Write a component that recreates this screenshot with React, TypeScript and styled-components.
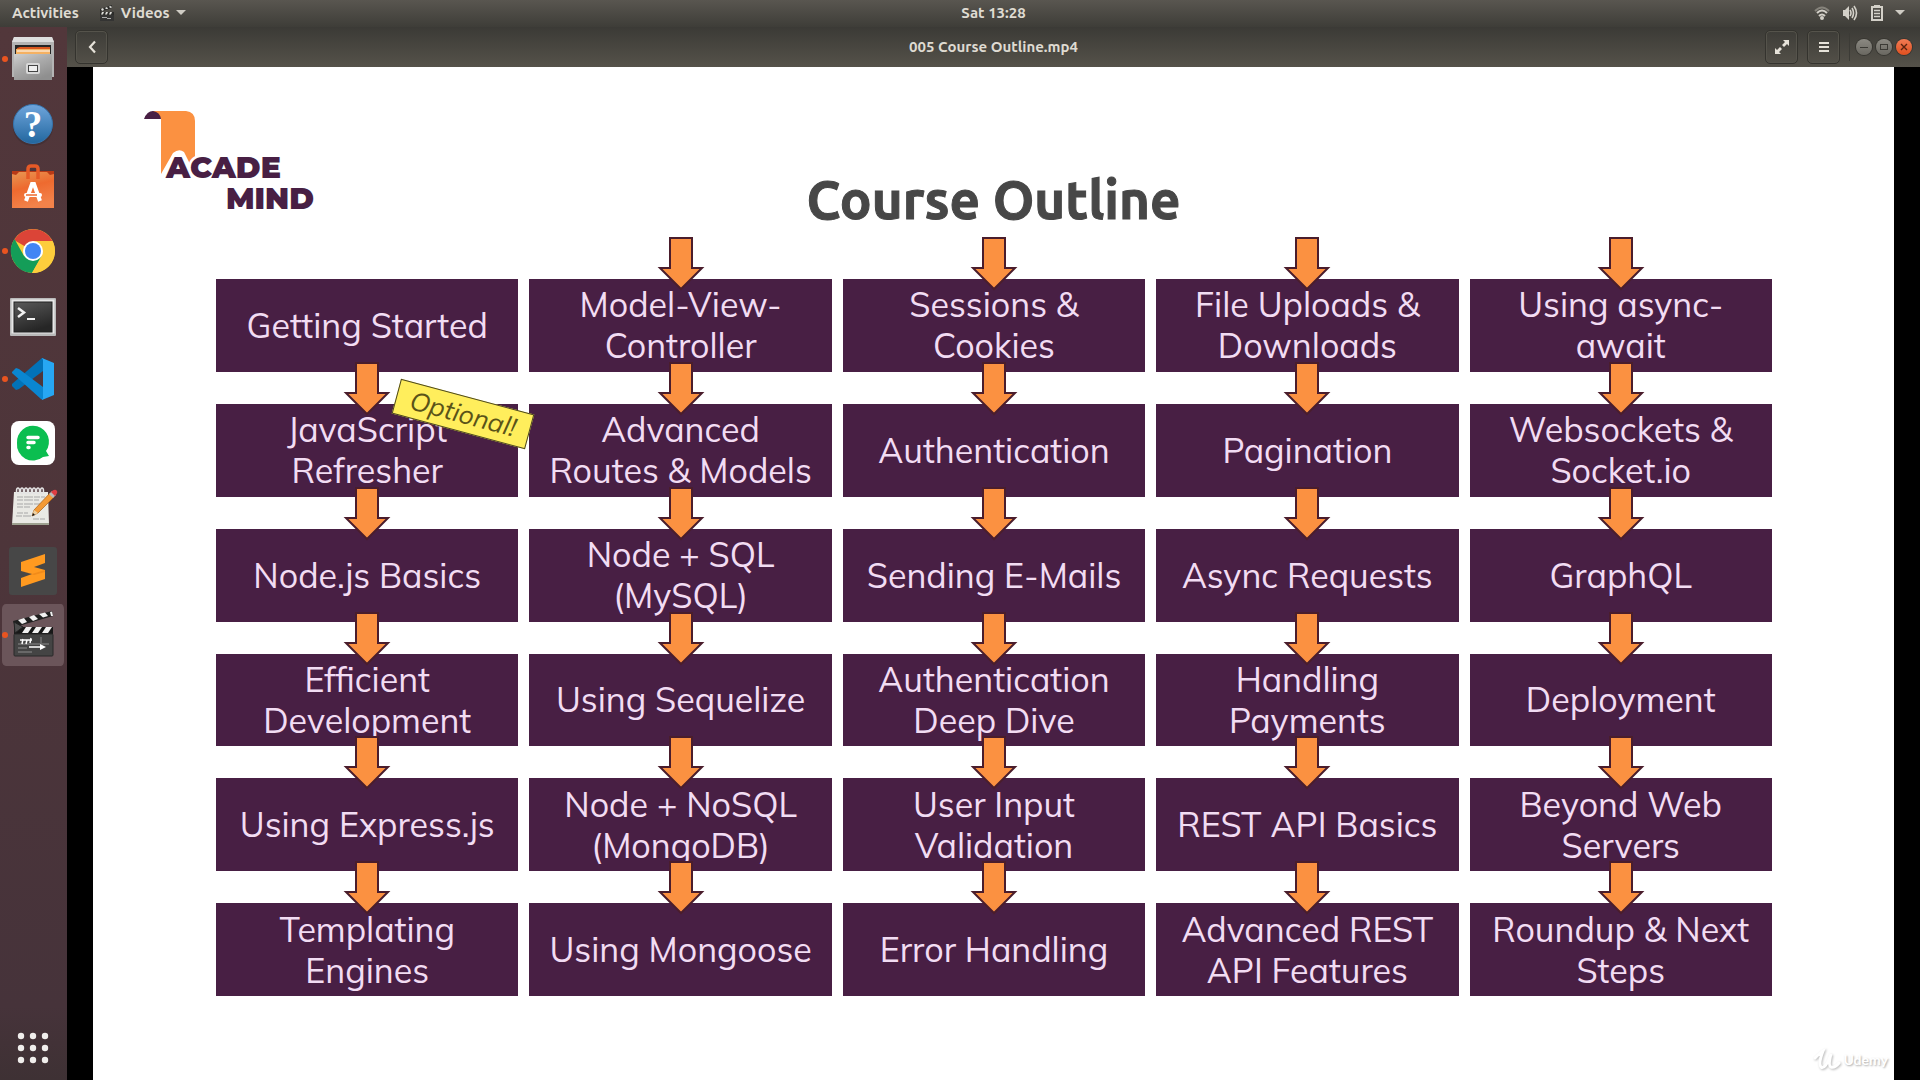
import React from "react";
import styled, { createGlobalStyle } from "styled-components";

const GlobalStyle = createGlobalStyle`
  *, *::before, *::after { box-sizing: border-box; }
  html, body, #root { height: 100%; }
  body {
    margin: 0;
    background: #000;
    overflow: hidden;
  }
  button { font: inherit; color: inherit; }
`;

const uiFont = `Ubuntu, "Noto Sans", "Open Sans", sans-serif`;
const slideFont = `Muli, Mulish, Nunito, Lato, "Noto Sans", sans-serif`;

const Desktop = styled.div`
  display: grid;
  grid-template: 27px minmax(0, 1fr) / 67px minmax(0, 1fr);
  height: 100vh;
  font: 600 15px/20px ${uiFont};
  color: #dfdbd2;
`;

/* ---------- top panel ---------- */

const TopPanel = styled.header`
  grid-column: 1 / -1;
  display: grid;
  grid-template-columns: 67px 1fr auto 1fr;
  align-items: center;
  padding-bottom: 1px;
  background: linear-gradient(#595650, #3e3d38);
`;

const PanelMenus = styled.nav`
  grid-column: 1 / 3;
  display: flex;
  align-items: center;
  gap: 20px;
  padding-left: 12px;
`;

const PanelButton = styled.button`
  display: flex;
  align-items: center;
  gap: 6px;
  padding: 0;
  border: 0;
  background: none;
`;

const StatusArea = styled(PanelButton)`
  justify-self: end;
  gap: 12px;
  padding-right: 15px;
`;

/* ---------- dock ---------- */

const DockBar = styled.nav`
  display: flex;
  flex-direction: column;
  background: linear-gradient(#52373b, #4d353a 50%, #46333a 93%, #3e3134);
`;

const DockItem = styled.button<{ $active?: boolean }>`
  height: 64px;
  padding: 0;
  border: 0;
  background: ${(p) => (p.$active ? "#6b555a" : "none")};
  background-clip: padding-box;
  border: solid transparent;
  border-width: 1px 3px 1px 2px;
  border-radius: 6px;

  svg {
    display: block;
    margin: -1px -3px -1px -2px;
  }
`;

const AppsItem = styled(DockItem)`
  margin-top: auto;
`;

/* ---------- window ---------- */

const PlayerWindow = styled.main`
  display: grid;
  grid-template-rows: 40px minmax(0, 1fr);
  min-width: 0;
`;

const TitleBar = styled.div`
  display: grid;
  grid-template-columns: 1fr auto 1fr;
  align-items: center;
  padding: 0 8px;
  background: linear-gradient(#3b3a36, #55524a);
`;

const WindowTitle = styled.h1`
  margin: 0;
  font-size: 15px;
  font-weight: 700;
`;

const TitleActions = styled.div`
  display: flex;
  align-items: center;
  justify-self: end;
  gap: 9px;
`;

const ToolButton = styled.button`
  display: grid;
  place-items: center;
  width: 33px;
  height: 34px;
  padding: 0;
  border: 1px solid #34332e;
  border-radius: 5px;
  background: transparent;
  box-shadow: inset 0 0 0 1px #55534b;
`;

const WindowControls = styled.div`
  display: flex;
  gap: 4px;
  padding-left: 6px;
  border-left: 1px solid #3c3b36;
  height: 28px;
  align-items: center;
`;

const RoundButton = styled.button<{ $close?: boolean }>`
  display: grid;
  place-items: center;
  width: 16px;
  height: 16px;
  padding: 0;
  border: 0;
  border-radius: 50%;
  background: ${(p) => (p.$close ? "linear-gradient(#f27b54, #e0501f)" : "linear-gradient(#8b8982, #6a6861)")};
  box-shadow: 0 0 0 1px #373631;
`;

const VideoArea = styled.section`
  display: flex;
  justify-content: center;
  background: #000;
`;

/* ---------- slide ---------- */

const Slide = styled.article`
  position: relative;
  display: flex;
  flex-direction: column;
  aspect-ratio: 16 / 9;
  height: 100%;
  padding-bottom: 84px;
  background: #fff;
  font-family: ${slideFont};
  font-weight: 400;
`;

const SlideHeader = styled.header`
  display: grid;
  grid-template-columns: 1fr auto 1fr;
  height: 212px;
  padding: 40px 51px 0;
`;

const SlideTitle = styled.h2`
  margin: 0;
  padding-top: 56px;
  font: 700 53px/73px ${uiFont};
  color: #474747;
  -webkit-text-stroke: 1px #474747;
`;

const OutlineGrid = styled.ol`
  flex: 1;
  display: grid;
  grid-template-columns: repeat(5, minmax(0, 1fr));
  grid-template-rows: repeat(6, minmax(0, 1fr));
  grid-auto-flow: column;
  gap: 32px 11px;
  margin: 0;
  padding: 0 122px 0 123px;
  list-style: none;
`;

const Topic = styled.li`
  position: relative;
  display: flex;
  align-items: center;
  justify-content: center;
  background: #481f44;
  color: #f2dcf3;
  font-size: 34px;
  line-height: 41px;
  text-align: center;
  white-space: pre-line;
`;

const ArrowIcon = styled.svg`
  position: absolute;
  z-index: 1;
  top: -43px;
  left: calc(50% - 24px);
`;

const OptionalTag = styled.span`
  position: absolute;
  z-index: 2;
  top: -8px;
  right: -14px;
  width: 138px;
  border: 1px solid #4c4820;
  background: #ffee5c;
  color: #5a5318;
  font-size: 26px;
  font-style: italic;
  line-height: 34px;
  transform: rotate(15deg);
`;

const Watermark = styled.div`
  position: absolute;
  right: 6px;
  bottom: 8px;
  display: flex;
  align-items: center;
  gap: 2px;
  color: #fff;
  font: 700 14px/24px Lato, sans-serif;
  text-shadow: 1px 1px 2px #aaa;

  svg { filter: drop-shadow(1px 1px 1px #bbb); }
`;

const GradientDefs = styled.svg`
  position: absolute;
`;

/* ---------- drawings ---------- */

const DownArrow = () => (
  <ArrowIcon width="48" height="55" viewBox="0 0 48 55" aria-hidden="true">
    <path d="M13 2H35V32H45L24 53L3 32H13Z" fill="#fb9141" stroke="#4a1d2c" strokeWidth="2" />
  </ArrowIcon>
);

const AcademindLogo = () => (
  <svg width="180" height="110" viewBox="0 0 180 110" role="img" aria-label="Academind">
    <path d="M8 4H42Q51 5 51 14V67L40 45Q35 41 29 46L17 67V12Z" fill="#fb9141" />
    <path d="M0 12Q3 4 9 4Q16 5 17 12Z" fill="#481f44" />
    <g fill="#481f44" fontFamily="Montserrat, Inter, sans-serif" fontWeight="900" fontSize="30">
      <text x="22" y="71" stroke="#fff" strokeWidth="5" strokeLinejoin="round" paintOrder="stroke">ACADE</text>
      <text x="82" y="102">MIND</text>
    </g>
  </svg>
);

const Caret = () => (
  <svg width="10" height="6" viewBox="0 0 10 6" aria-hidden="true">
    <path d="M0 0H10L5 5Z" fill="#cfccc4" />
  </svg>
);

const MiniClapper = () => (
  <svg width="16" height="16" viewBox="0 0 16 16" aria-hidden="true">
    <path d="M1 4L13 0V3L1 7ZM1 7H15V10H1Z" fill="#2c2c2a" />
    <path d="M2 4L4 3L5 5L3 6ZM6 3L8 2L9 4L7 4ZM10 1.500L12 1L13 2.500L11 3ZM3 7H5L4 9.500H2ZM7 7H9L8 9.500H6ZM11 7H13L12 9.500H10Z" fill="#dcdcd8" />
    <rect x="1" y="10" width="14" height="6" fill="#343433" />
    <path d="M3 12.500H8M8 13.500H12" stroke="#aaa" />
  </svg>
);

const Wifi = () => (
  <svg width="16" height="14" viewBox="0 0 16 14" fill="none" strokeWidth="2" aria-hidden="true">
    <path d="M1 5Q8 -2 15 5" stroke="#86837b" />
    <path d="M3 7Q8 2 13 7M5 10Q8 7 11 10" stroke="#d3d0c8" />
    <circle cx="8" cy="12" r="2" fill="#d3d0c8" />
  </svg>
);

const Speaker = () => (
  <svg width="17" height="16" viewBox="0 0 17 16" fill="none" stroke="#d3d0c8" strokeWidth="1.6" aria-hidden="true">
    <path d="M1 5H3L7 1V15L3 11H1Z" fill="#d3d0c8" stroke="none" />
    <path d="M8 5Q10 8 8 11M10 3Q13 8 10 13M12 1Q17 8 12 15" />
  </svg>
);

const Battery = () => (
  <svg width="12" height="16" viewBox="0 0 12 16" aria-hidden="true">
    <path d="M3 0H9V2H3Z" fill="#d3d0c8" />
    <rect x="1" y="2" width="10" height="13" fill="none" stroke="#d3d0c8" strokeWidth="2" />
    <path d="M3 5.500H9M3 8.500H9M3 11.500H9" stroke="#d3d0c8" strokeWidth="1.5" />
  </svg>
);

const FilesIcon = () => (
  <>
    <path d="M14 10H52L54 15V50H12V15Z" fill="#b4b4b4" />
    <path d="M14 10H52L54 15H12Z" fill="#dedede" />
    <rect x="15" y="18" width="36" height="10" fill="#252525" />
    <path d="M17 21L20 20H50V28H16Z" fill="#d9571f" />
    <path d="M16 22H50V27H16Z" fill="#f5b162" />
    <path d="M17 24H50" stroke="#fff" />
    <path d="M14 27H52V53H14Z" fill="url(#steel)" />
    <rect x="26" y="36" width="14" height="11" rx="2" fill="#d8d8d8" />
    <rect x="28.5" y="38.500" width="9" height="6" fill="#eee" stroke="#444" />
  </>
);

const HelpIcon = () => (
  <>
    <ellipse cx="33" cy="36" rx="20" ry="19" fill="#35292d" opacity=".4" />
    <circle cx="33" cy="33" r="19.500" fill="url(#blue)" stroke="#3574ad" />
    <text x="33" y="46" textAnchor="middle" fill="#fff" fontFamily="Liberation Serif, serif" fontWeight="700" fontSize="37">?</text>
  </>
);

const SoftwareIcon = () => (
  <>
    <path d="M12 16H54V53H12Z" fill="url(#bag)" />
    <path d="M12 16H54V19L50 20L47 17H19L16 20L12 19Z" fill="#b93a16" />
    <path d="M28 24V14Q28 11 31 11H35Q38 11 38 14V24" fill="none" stroke="#e65a27" strokeWidth="3.500" />
    <path d="M26 46L32 29H34L40 46" fill="none" stroke="#fff" strokeWidth="4" />
    <rect x="24" y="38" width="18" height="4" rx="2" fill="#fff" />
    <path d="M26 40H37" stroke="#ee6a2f" strokeWidth="1.500" />
  </>
);

const ChromeIcon = () => (
  <>
    <circle cx="33" cy="32" r="22" fill="#fdcd3c" />
    <path d="M33 32L14 21A22 22 0 0 1 52.500 22H33Z" fill="#db4437" />
    <path d="M14.500 20A22 22 0 0 0 32 54L42 37L33 32L24 37Z" fill="#149d58" />
    <path d="M33 22H52.500A22 22 0 0 1 32 54L41.500 37Z" fill="#fdcd3c" />
    <circle cx="33" cy="32" r="10" fill="#fff" />
    <circle cx="33" cy="32" r="8" fill="#4285f4" />
  </>
);

const TerminalIcon = () => (
  <>
    <rect x="10" y="15" width="46" height="38" rx="1" fill="#b9b9b9" />
    <rect x="11.500" y="16.500" width="43" height="34" fill="#e7e7e7" />
    <rect x="14" y="19" width="38" height="30" fill="url(#screen)" stroke="#222" />
    <path d="M18 25L24 29.500L18 34" fill="none" stroke="#f2f2f2" strokeWidth="2.500" />
    <path d="M27 36H35" stroke="#f2f2f2" strokeWidth="2" />
  </>
);

const CodeIcon = () => (
  <>
    <path d="M43 11V24L19 42L16 43L12 39V37L42 11Z" fill="#0272b8" />
    <path d="M12 27V25L16 21L19 22L43 40V53L41 52L12 26Z" fill="#0a86d1" />
    <path d="M42 11L54 16V48L42 53L43 51V13Z" fill="#27a7f3" />
  </>
);

const ChatIcon = () => (
  <>
    <rect x="11" y="10" width="44" height="44" rx="8" fill="#fff" />
    <path d="M17 32A16 16 0 1 1 46 40L49 45L43 46A16 16 0 0 1 17 32Z" fill="#0bbe50" />
    <path d="M28 26.500H38M28 31.500H34M28 36.500H29" stroke="#fff" strokeWidth="3.500" strokeLinecap="round" />
  </>
);

const EditorIcon = () => (
  <>
    <path d="M14 17H48L49 50H12Z" fill="#e9e9e4" />
    <path d="M12 48H49V50H12Z" fill="#9da08f" />
    <path d="M17 22H45M17 25H39M17 29H43M17 32H30M17 38H28M16 41H31M33 44H45" stroke="#a7a7a7" strokeDasharray="6 1 9 1" />
    <g fill="none" stroke="#e4e4e4" strokeWidth="1.500">
      {[18, 22, 26, 30, 34, 38, 42].map((x) => (
        <ellipse key={x} cx={x} cy="16" rx="1.500" ry="3" />
      ))}
    </g>
    <path d="M32 41L34 35L50 18L54 22L38 38Z" fill="#f39a35" stroke="#a85e16" strokeWidth=".7" />
    <path d="M32 41L34 35L38 38Z" fill="#ecd1a4" />
    <path d="M32 41L33 38L35 40Z" fill="#111" />
    <path d="M49 19L52 16L56 20L53 23Z" fill="#b9b9b9" />
    <path d="M51 17Q55 13 57 16Q58 18 55 21Z" fill="#de3d43" />
  </>
);

const SublimeIcon = () => (
  <>
    <rect x="9" y="8" width="48" height="48" rx="3" fill="#474747" />
    <path d="M21 23L45 15V24L34 28L45 31V40L21 48V39L32 35L21 32Z" fill="#ff9a20" />
    <path d="M21 32L32 35L45 31V33L34 36Z" fill="#e47b13" opacity=".5" />
  </>
);

const VideosIcon = () => (
  <>
    <path d="M13 18L52 8L53 13L15 24Z" fill="#1f1f1f" />
    <path d="M18 17L24 15L27 19L22 21ZM29 14L34 12L38 16L33 18ZM39 11L45 9.500L48 13L43 14.500ZM50 9L52 8.500L53 13L51 13Z" fill="#f1f1f1" />
    <path d="M14 24H53V31H14Z" fill="#181818" />
    <path d="M26 24H32L28 30H22ZM36 24H42L38 30H32ZM46 24H52L48 30H42Z" fill="#f1f1f1" />
    <path d="M14 19L23 24L15 30Z" fill="#4d4d4d" stroke="#222" />
    <rect x="14" y="31" width="39" height="22" rx="1" fill="#444" stroke="#292929" />
    <path d="M18 41H49M18 45H27M18 49H32M41 34V40" stroke="#8c8c8c" />
    <path d="M20 37H32M23 36L22 41M27 37L26 41M31 35L30 40M29 44H42" stroke="#fff" strokeWidth="1.500" />
    <path d="M40 41L46 44L40 47Z" fill="#fff" />
  </>
);

const AppsIcon = () => (
  <g fill="#f0eeec">
    {[20, 32, 44].flatMap((y) => [21, 33, 45].map((x) => <circle key={`${x}-${y}`} cx={x} cy={y} r="3.200" />))}
  </g>
);

const IconCell = ({ running, children }: { running?: boolean; children: React.ReactNode }) => (
  <svg width="67" height="64" viewBox="0 0 67 64" aria-hidden="true">
    {children}
    {running && <circle cx="5" cy="32" r="3" fill="#e95420" />}
  </svg>
);

const Gradients = () => (
  <GradientDefs width="0" height="0" aria-hidden="true">
    <defs>
      <linearGradient id="steel" x2=".6" y2="1">
        <stop stopColor="#cfcfcf" />
        <stop offset=".5" stopColor="#aaa" />
        <stop offset="1" stopColor="#8f8f8f" />
      </linearGradient>
      <linearGradient id="blue" x2="0" y2="1">
        <stop stopColor="#6fa5dc" />
        <stop offset="1" stopColor="#22679f" />
      </linearGradient>
      <linearGradient id="bag" x2=".3" y2="1">
        <stop stopColor="#e79a55" />
        <stop offset=".5" stopColor="#ee6a2f" />
        <stop offset="1" stopColor="#f3824a" />
      </linearGradient>
      <linearGradient id="screen" x2=".4" y2="1">
        <stop stopColor="#5a5a5a" />
        <stop offset="1" stopColor="#262626" />
      </linearGradient>
    </defs>
  </GradientDefs>
);

/* ---------- data ---------- */

const apps = [
  { name: "Files", Icon: FilesIcon, running: true },
  { name: "Help", Icon: HelpIcon },
  { name: "Ubuntu Software", Icon: SoftwareIcon },
  { name: "Google Chrome", Icon: ChromeIcon, running: true },
  { name: "Terminal", Icon: TerminalIcon },
  { name: "Visual Studio Code", Icon: CodeIcon, running: true },
  { name: "Flock", Icon: ChatIcon },
  { name: "Text Editor", Icon: EditorIcon },
  { name: "Sublime Text", Icon: SublimeIcon },
  { name: "Videos", Icon: VideosIcon, running: true, active: true },
];

const columns = [
  ["Getting Started", "JavaScript\nRefresher", "Node.js Basics", "Efficient\nDevelopment", "Using Express.js", "Templating\nEngines"],
  ["Model-View-\nController", "Advanced\nRoutes & Models", "Node + SQL\n(MySQL)", "Using Sequelize", "Node + NoSQL\n(MongoDB)", "Using Mongoose"],
  ["Sessions &\nCookies", "Authentication", "Sending E-Mails", "Authentication\nDeep Dive", "User Input\nValidation", "Error Handling"],
  ["File Uploads &\nDownloads", "Pagination", "Async Requests", "Handling\nPayments", "REST API Basics", "Advanced REST\nAPI Features"],
  ["Using async-\nawait", "Websockets &\nSocket.io", "GraphQL", "Deployment", "Beyond Web\nServers", "Roundup & Next\nSteps"],
];

const topics = columns.flat();

export default function App() {
  return (
    <Desktop>
      <GlobalStyle />
      <Gradients />
      <TopPanel>
        <PanelMenus>
          <PanelButton>Activities</PanelButton>
          <PanelButton>
            <MiniClapper />
            Videos
            <Caret />
          </PanelButton>
        </PanelMenus>
        <PanelButton>Sat 13:28</PanelButton>
        <StatusArea aria-label="System menu">
          <Wifi />
          <Speaker />
          <Battery />
          <Caret />
        </StatusArea>
      </TopPanel>

      <DockBar aria-label="Dock">
        {apps.map(({ name, Icon, running, active }) => (
          <DockItem key={name} aria-label={name} $active={active}>
            <IconCell running={running}>
              <Icon />
            </IconCell>
          </DockItem>
        ))}
        <AppsItem aria-label="Show Applications">
          <IconCell>
            <AppsIcon />
          </IconCell>
        </AppsItem>
      </DockBar>

      <PlayerWindow>
        <TitleBar>
          <ToolButton aria-label="Back">
            <svg width="10" height="14" viewBox="0 0 10 14" aria-hidden="true">
              <path d="M8 1.500L3 7L8 12.500" fill="none" stroke="#e6e2d9" strokeWidth="2.200" />
            </svg>
          </ToolButton>
          <WindowTitle>005 Course Outline.mp4</WindowTitle>
          <TitleActions>
            <ToolButton aria-label="Fullscreen">
              <svg width="16" height="16" viewBox="0 0 16 16" aria-hidden="true">
                <path d="M9 1H15V7L13 5L10 8L8 6L11 3ZM7 15H1V9L3 11L6 8L8 10L5 13Z" fill="#e6e2d9" />
              </svg>
            </ToolButton>
            <ToolButton aria-label="Menu">
              <svg width="10" height="10" viewBox="0 0 10 10" aria-hidden="true">
                <path d="M0 1H10M0 5H10M0 9H10" stroke="#e6e2d9" strokeWidth="2" />
              </svg>
            </ToolButton>
            <WindowControls>
              <RoundButton aria-label="Minimize">
                <svg width="8" height="8" viewBox="0 0 8 8" aria-hidden="true">
                  <path d="M0 4.500H8" stroke="#3b3a35" />
                </svg>
              </RoundButton>
              <RoundButton aria-label="Maximize">
                <svg width="8" height="8" viewBox="0 0 8 8" aria-hidden="true">
                  <rect x=".5" y="1.500" width="7" height="5" fill="none" stroke="#3b3a35" />
                </svg>
              </RoundButton>
              <RoundButton $close aria-label="Close">
                <svg width="8" height="8" viewBox="0 0 8 8" aria-hidden="true">
                  <path d="M1 1L7 7M7 1L1 7" stroke="#5a2310" strokeWidth="1.400" />
                </svg>
              </RoundButton>
            </WindowControls>
          </TitleActions>
        </TitleBar>

        <VideoArea>
          <Slide>
            <SlideHeader>
              <AcademindLogo />
              <SlideTitle>Course Outline</SlideTitle>
            </SlideHeader>
            <OutlineGrid>
              {topics.map((topic, index) => (
                <Topic key={topic}>
                  {index > 0 && <DownArrow />}
                  {topic}
                  {topic.startsWith("JavaScript") && <OptionalTag>Optional!</OptionalTag>}
                </Topic>
              ))}
            </OutlineGrid>
            <Watermark>
              <svg width="28" height="24" viewBox="0 0 28 24" aria-hidden="true">
                <path d="M2 10Q8 4 10 3Q5 16 8 19Q12 22 18 6Q15 18 18 19Q22 20 26 15" fill="none" stroke="#fff" strokeWidth="3" strokeLinecap="round" />
              </svg>
              Udemy
            </Watermark>
          </Slide>
        </VideoArea>
      </PlayerWindow>
    </Desktop>
  );
}
